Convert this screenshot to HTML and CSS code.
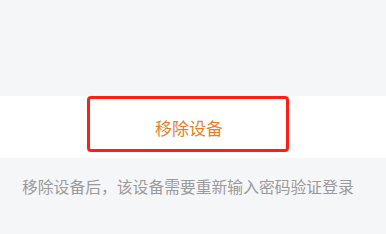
FILE: index.html
```html
<!DOCTYPE html>
<html lang="zh">
<head>
<meta charset="utf-8">
<link rel="stylesheet" href="styles.css">
</head>
<body>
<div class="page">
  <div class="top-space"></div>
  <div class="action-band">
    <button class="remove-btn">移除设备</button>
    <div class="highlight"></div>
  </div>
  <p class="hint">移除设备后，该设备需要重新输入密码验证登录</p>
</div>
</body>
</html>
```
FILE: styles.css
```css
html, body {
  margin: 0;
  padding: 0;
  background: #f5f6f8;
  font-family: "Noto Sans CJK SC", "Noto Sans", sans-serif;
}
.page {
  width: 386px;
  height: 234px;
  overflow: hidden;
}
.top-space {
  height: 96px;
}
.action-band {
  position: relative;
  height: 62px;
  background: #ffffff;
  display: flex;
  align-items: center;
  justify-content: center;
}
.remove-btn {
  border: none;
  background: transparent;
  padding: 0;
  margin: 2px 8px 0 0;
  font-family: inherit;
  font-size: 17px;
  line-height: 22px;
  color: #e37f27;
}
.highlight {
  position: absolute;
  left: 87px;
  top: 0;
  width: 202px;
  height: 56px;
  box-sizing: border-box;
  border: 3px solid #ff1e16;
  border-radius: 4px;
}
.hint {
  margin: 18px 0 0 22px;
  font-size: 15.8px;
  line-height: 22px;
  color: #9a9a9a;
}
```
